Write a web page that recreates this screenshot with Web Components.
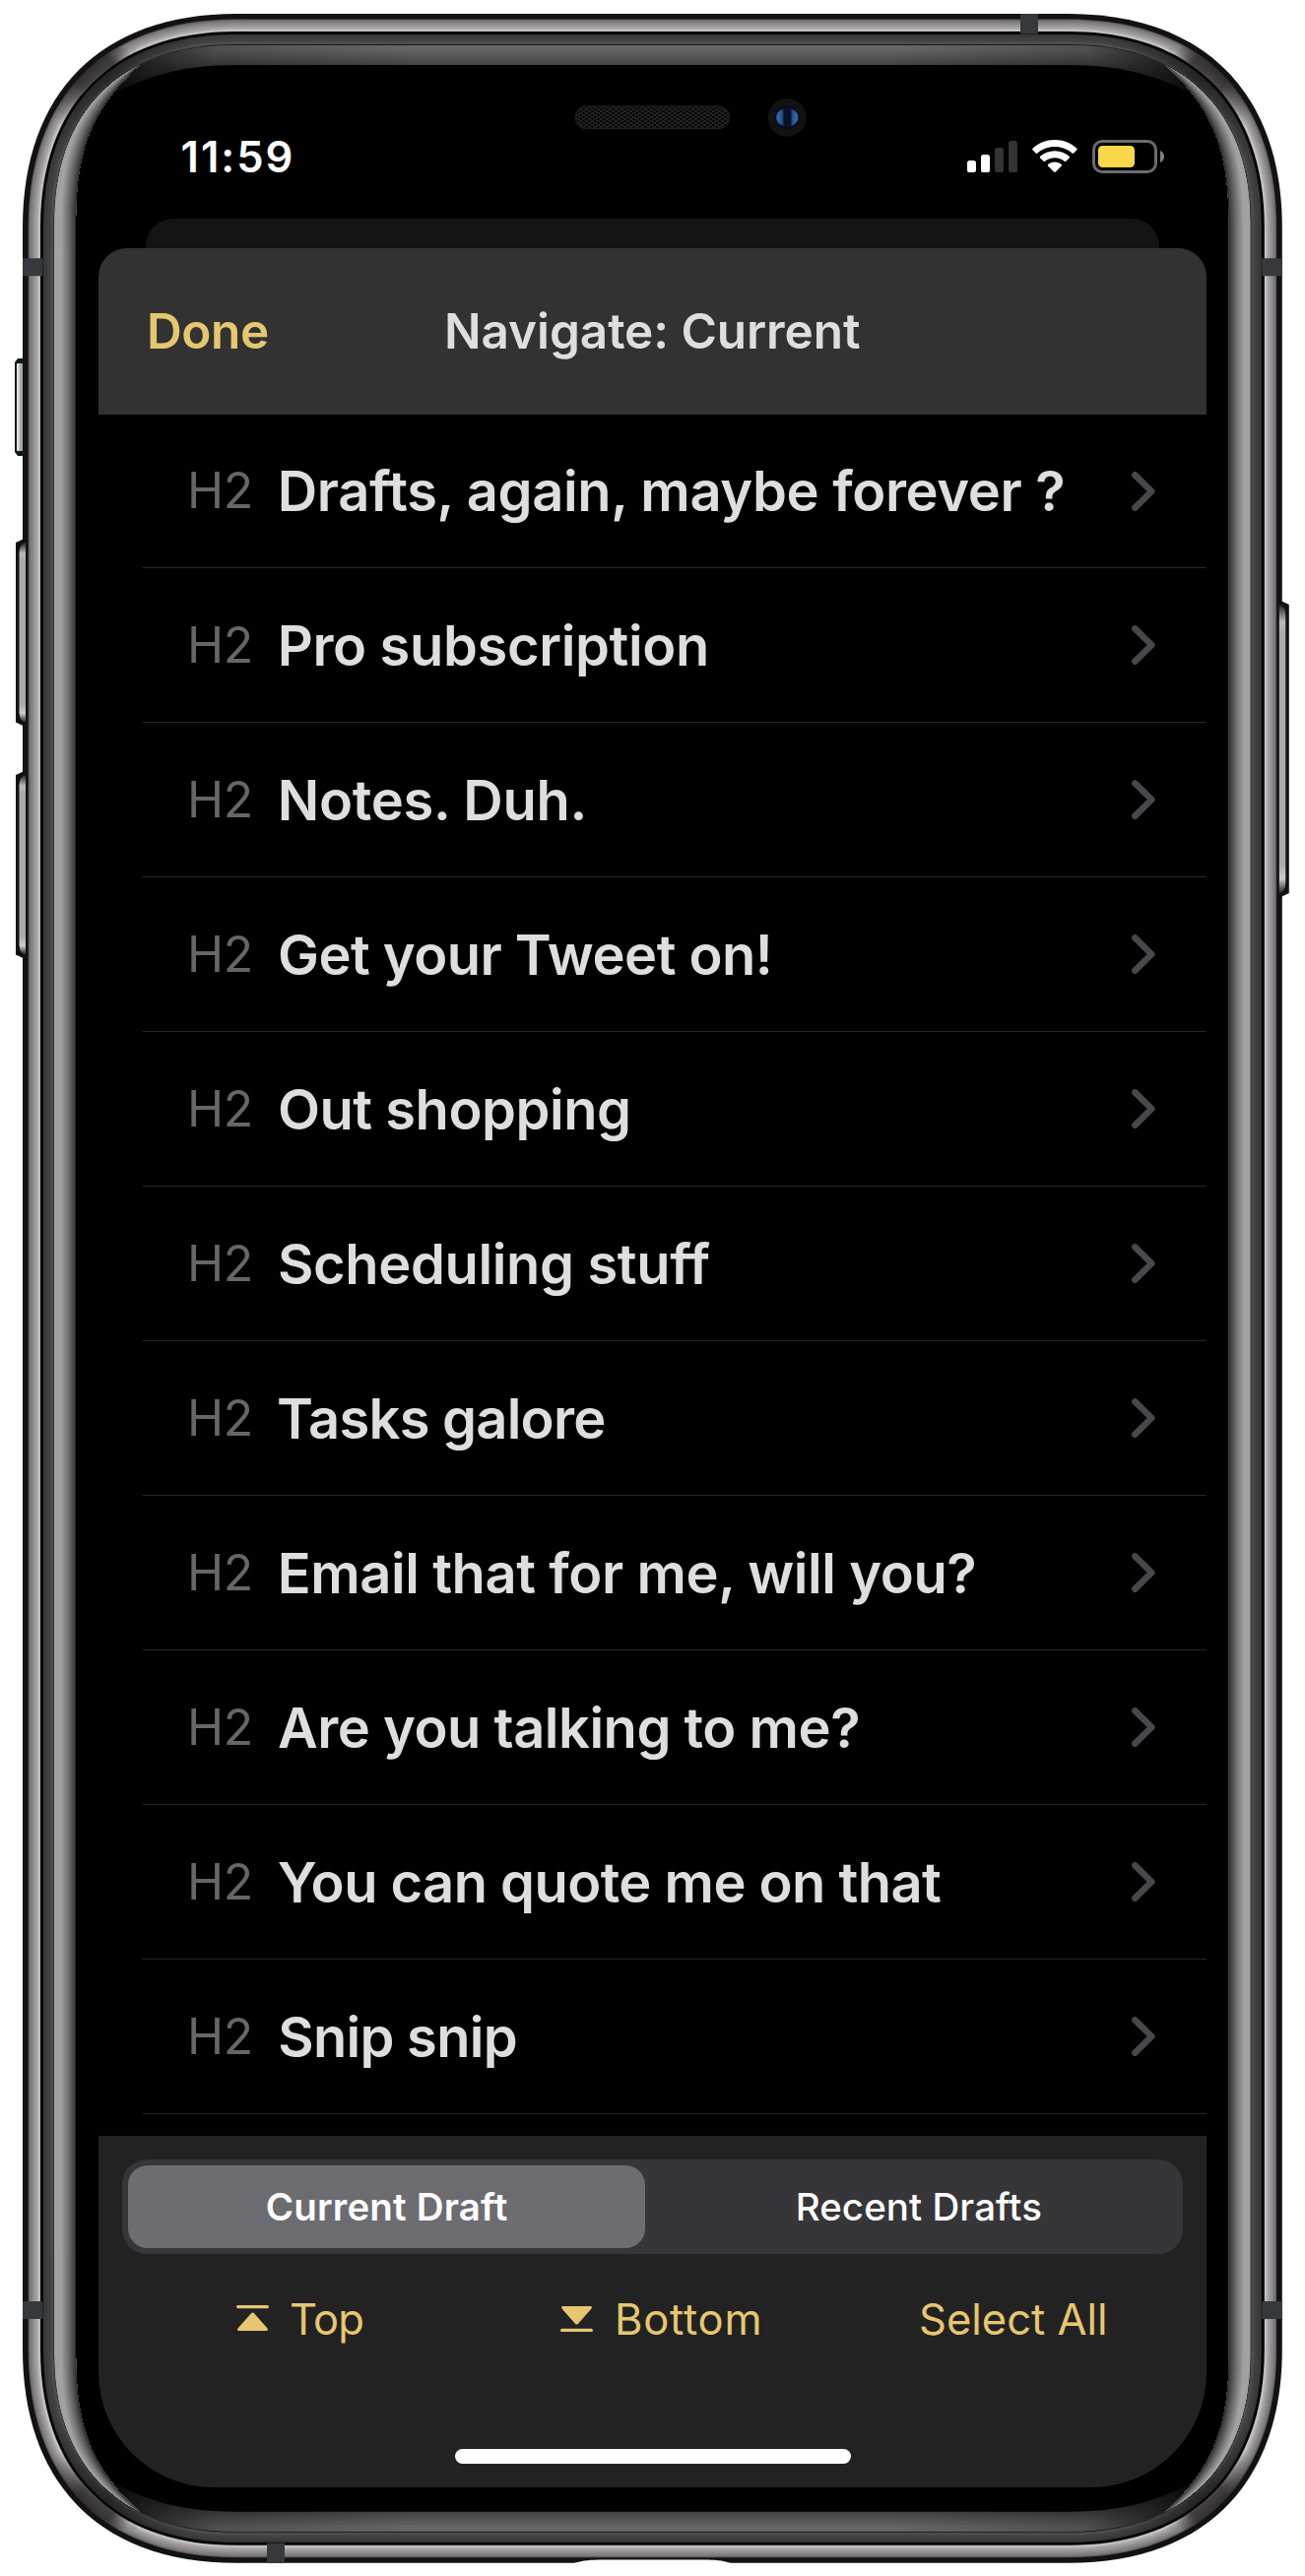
<!DOCTYPE html>
<html lang="en">
<head>
<meta charset="utf-8">
<title>Navigate: Current</title>
<style>
html, body { margin: 0; background: #fff; }
body { width: 1325px; height: 2616px; overflow: hidden; }
</style>
</head>
<body>
<phone-frame>
  <status-bar time="11:59"></status-bar>
  <modal-sheet>
    <nav-header slot="header"></nav-header>
    <heading-row ink="793.5" first>Drafts, again, maybe forever ?</heading-row>
    <heading-row ink="431.3">Pro subscription</heading-row>
    <heading-row ink="306.7">Notes. Duh.</heading-row>
    <heading-row ink="496.8" shift="-1.7">Get your Tweet on!</heading-row>
    <heading-row ink="354" shift="-1.7">Out shopping</heading-row>
    <heading-row ink="437.3" shift="-1.7">Scheduling stuff</heading-row>
    <heading-row ink="330.2" shift="-2.7">Tasks galore</heading-row>
    <heading-row ink="703.6">Email that for me, will you?</heading-row>
    <heading-row ink="588.2" shift="-2.7">Are you talking to me?</heading-row>
    <heading-row ink="672.4" shift="-3">You can quote me on that</heading-row>
    <heading-row ink="239.5" shift="-1.5">Snip snip</heading-row>
    <bottom-panel slot="footer"></bottom-panel>
  </modal-sheet>
</phone-frame>

<script>
const shadow = (el, html) => { el.attachShadow({ mode: 'open' }).innerHTML = html; return el.shadowRoot; };

// A single line of text whose box is exactly its visible ink width.
class InkText extends HTMLElement {
  connectedCallback() {
    if (this.shadowRoot) return;
    const size = this.getAttribute('size'), weight = this.getAttribute('weight') || 400;
    const ink = parseFloat(this.getAttribute('ink'));
    const fam = 'Inter, "Liberation Sans", sans-serif';
    const root = shadow(this, `<style>
      :host { display: block; flex: none; width: ${ink}px; font: ${weight} ${size}px/1.2 ${fam}; white-space: pre; }
      span { display: inline-block; }
    </style><span><slot></slot></span>`);
    const span = root.querySelector('span');
    const text = this.textContent;
    const ctx = document.createElement('canvas').getContext('2d');
    ctx.font = `${weight} ${size}px ${fam}`;
    const m = ctx.measureText(text);
    const left = -m.actualBoundingBoxLeft, right = m.width - m.actualBoundingBoxRight;
    const natural = span.getBoundingClientRect().width - left - right;
    span.style.letterSpacing = ((ink - natural) / (text.length - 1)) + 'px';
    span.style.marginLeft = -left + 'px';
  }
}
customElements.define('ink-text', InkText);

class StatusBar extends HTMLElement {
  connectedCallback() {
    shadow(this, `<style>
      :host { display: flex; align-items: center; height: 126px; padding: 96px 43px 0 84.5px; color: #fff; }
      svg { display: block; margin-left: auto; }
    </style>
    <ink-text size="43.5" weight="600" ink="111">${this.getAttribute('time')}</ink-text>
    <svg width="200" height="34" viewBox="0 0 200 34">
      <rect x="0" y="21" width="9" height="12" rx="2.6" fill="#fff"/>
      <rect x="14" y="15" width="9" height="18" rx="2.6" fill="#fff"/>
      <rect x="28" y="8" width="9" height="25" rx="2.6" fill="#333"/>
      <rect x="42" y="1" width="9" height="32" rx="2.6" fill="#333"/>
      <g fill="#fff" transform="translate(66 0)">
        <path d="M22.9 0C31.6 0 39.4 3.4 45.3 8.7C45.8 9.2 45.8 9.8 45.4 10.3L42.2 13.5C41.7 14 41 14 40.5 13.6C35.9 9.4 29.7 7 22.9 7C16.1 7 9.9 9.4 5.3 13.6C4.8 14 4.1 14 3.6 13.5L.4 10.3C0 9.8 0 9.2 .5 8.7C6.4 3.4 14.2 0 22.9 0Z"/>
        <path d="M22.9 11.2C28.6 11.2 33.8 13.3 37.7 16.8C38.2 17.3 38.2 17.9 37.7 18.4L34.2 21.8C33.8 22.2 33.2 22.2 32.7 21.8C30.1 19.5 26.7 18.2 22.9 18.2C19.1 18.2 15.7 19.5 13.1 21.8C12.6 22.2 12 22.2 11.6 21.8L8.1 18.4C7.6 17.9 7.6 17.3 8.1 16.8C12 13.3 17.2 11.2 22.9 11.2Z"/>
        <path d="M22.9 22.6C25.5 22.6 27.9 23.5 29.7 25C30.2 25.4 30.2 26 29.7 26.5L23.8 32.4C23.2 33 22.6 33 22 32.4L16.1 26.5C15.6 26 15.6 25.4 16.1 25C17.9 23.5 20.3 22.6 22.9 22.6Z"/>
      </g>
      <rect x="128.5" y="1.5" width="63" height="31" rx="8.5" fill="none" stroke="#6b6b6b" stroke-width="3"/>
      <rect x="133" y="6" width="37" height="22" rx="4.5" fill="#f8d84a"/>
      <path d="M196 11C198.600 12.200 200 14.300 200 17C200 19.700 198.600 21.800 196 23Z" fill="#808080"/>
    </svg>`);
  }
}
customElements.define('status-bar', StatusBar);

class NavHeader extends HTMLElement {
  connectedCallback() {
    shadow(this, `<style>
      :host { display: flex; align-items: center; gap: 182px; height: 169px; padding-left: 52px; background: #323232; border-radius: 29px 29px 0 0; color: #dedede; }
      .done { color: #e6c770; }
    </style>
    <ink-text class="done" size="49.5" weight="600" ink="120">Done</ink-text>
    <ink-text size="49.5" weight="600" ink="419">Navigate: Current</ink-text>`);
  }
}
customElements.define('nav-header', NavHeader);

class HeadingRow extends HTMLElement {
  connectedCallback() {
    const shift = parseFloat(this.getAttribute('shift') || 0);
    shadow(this, `<style>
      :host { display: grid; height: 157px; color: #dedede; }
      :host([first]) { height: 156px; }
      .row { display: flex; align-items: center; padding: 0 52px 0 94px; grid-area: 1 / 1; }
      .line { grid-area: 1 / 1; align-self: end; height: 1px; margin-left: 45px; background: #262626; }
      .level { color: #666; padding-bottom: 2px; }
      .title { margin-left: ${32 + shift}px; padding-top: 2px; }
      svg { margin-left: auto; display: block; margin-top: -1px; }
    </style>
    <div class="row">
      <ink-text class="level" size="50" weight="400" ink="59.7">H2</ink-text>
      <ink-text class="title" size="56" weight="600" ink="${this.getAttribute('ink')}">${this.textContent}</ink-text>
      <svg width="24" height="40" viewBox="0 0 24 40"><path d="M3.400 3.400L20.300 20L3.400 36.600" fill="none" stroke="#48484a" stroke-width="6.600" stroke-linecap="round" stroke-linejoin="round"/></svg>
    </div>
    <div class="line"></div>`);
  }
}
customElements.define('heading-row', HeadingRow);

class SegmentControl extends HTMLElement {
  connectedCallback() {
    shadow(this, `<style>
      :host { display: grid; grid-template-columns: 525px 1fr; box-sizing: border-box; height: 96px; padding: 6px; background: #363638; border-radius: 25px; color: #fff; }
      div { display: flex; align-items: center; border-radius: 20px; }
      .on { background: #6d6c71; padding-left: 140.700px; }
      .off { padding-left: 155.700px; }
    </style>
    <div class="on"><ink-text size="38.5" weight="600" ink="244">Current Draft</ink-text></div>
    <div class="off"><ink-text size="38.5" weight="500" ink="245.500">Recent Drafts</ink-text></div>`);
  }
}
customElements.define('segment-control', SegmentControl);

class BottomPanel extends HTMLElement {
  connectedCallback() {
    shadow(this, `<style>
      :host { display: flex; flex-direction: column; box-sizing: border-box; height: 357px; padding: 24px 24px 0; background: #222; border-radius: 0 0 117px 117px; color: #e6c770; }
      .tools { display: flex; align-items: center; height: 132px; padding-left: 116px; }
      svg { display: block; margin-top: -2px; }
      .top { margin: 0 200.700px 0 23px; }
      .bottom { margin: 0 164.500px 0 25px; }
      .home { align-self: center; width: 402px; height: 15px; margin-top: 66px; border-radius: 7.500px; background: #fff; }
    </style>
    <segment-control></segment-control>
    <div class="tools">
      <svg width="33" height="28" viewBox="0 0 33 28" fill="#e6c770"><rect y="1" width="33" height="3.200" rx="1.600"/><path d="M15.200 9.100Q16.500 7.900 17.800 9.100L31.300 24.200Q32.800 27 30.500 27H2.500Q.200 27 1.700 24.200Z"/></svg>
      <ink-text class="top" size="43.5" ink="72.3">Top</ink-text>
      <svg width="33" height="28" viewBox="0 0 33 28" fill="#e6c770"><path d="M15.200 19.900Q16.500 21.100 17.800 19.900L31.300 4.800Q32.800 2 30.500 2H2.500Q.200 2 1.700 4.800Z"/><rect y="24.800" width="33" height="3.200" rx="1.600"/></svg>
      <ink-text class="bottom" size="43.5" ink="143.5">Bottom</ink-text>
      <ink-text size="43.5" ink="187">Select All</ink-text>
    </div>
    <div class="home"></div>`);
  }
}
customElements.define('bottom-panel', BottomPanel);

class ModalSheet extends HTMLElement {
  connectedCallback() {
    shadow(this, `<style>
      :host { display: block; }
      .behind { height: 30px; margin: 0 48px; background: #141414; border-radius: 28px 28px 0 0; }
      .list { height: 1748px; background: #000; overflow: hidden; }
    </style>
    <div class="behind"></div>
    <slot name="header"></slot>
    <div class="list"><slot></slot></div>
    <slot name="footer"></slot>`);
  }
}
customElements.define('modal-sheet', ModalSheet);

class PhoneFrame extends HTMLElement {
  connectedCallback() {
    const CX = 662.4, CY = 1308.4, W = 2 * CX, H = 2 * CY;
    // Rounded outline given by its left/top edge, corner extent and tightness.
    const outline = (l, t, e, k = .632) => {
      const r = W - l, b = H - t, c = e * (1 - k);
      return `M${l + e} ${t}H${r - e}C${r - c} ${t} ${r} ${t + c} ${r} ${t + e}V${b - e}C${r} ${b - c} ${r - c} ${b} ${r - e} ${b}H${l + e}C${l + c} ${b} ${l} ${b - c} ${l} ${b - e}V${t + e}C${l} ${t + c} ${l + c} ${t} ${l + e} ${t}Z`;
    };
    const ramp = (stops, t) => {
      let i = 0;
      while (i < stops.length - 2 && t > stops[i + 1][0]) i++;
      const [a, u] = stops[i], [b, v] = stops[i + 1], f = (t - a) / (b - a);
      return `rgb(${u.map((n, j) => Math.round(n + (v[j] - n) * f))})`;
    };
    const g = n => [n, n, n];
    const rings = (l0, l1, t0, t1, e0, e1, stops) => {
      let s = ''; const n = Math.round((l1 - l0) * 1.5);
      for (let i = 0; i < n; i++) {
        const f = i / n;
        s += `<path d="${outline(l0 + (l1 - l0) * f, t0 + (t1 - t0) * f, e0 + (e1 - e0) * f)}" fill="${ramp(stops, f)}"/>`;
      }
      return s;
    };
    // Left glass edge: crescent strips that all meet at the two corner tips.
    let side = '';
    for (let i = 0; i < 33; i++) {
      const f = i / 33, x = 55 + 22 * f, y1 = 140 + 10 * f, x2 = 80 + 14 * f, y2 = 92 + 16 * f;
      side += `<path fill="${ramp([[0, g(160)], [.3, g(163)], [.65, g(110)], [.93, g(62)], [1, g(25)]], f)}" d="M146 62C${x2} ${y2} ${x} ${y1} ${x} 225V${H - 225}C${x} ${H - y1} ${x2} ${H - y2} 146 ${H - 62}C94 ${H - 108} 77 ${H - 150} 77 ${H - 225}V225C77 150 94 108 146 62Z"/>`;
    }
    const flipX = `translate(${W} 0) scale(-1 1)`, flipY = `translate(0 ${H}) scale(1 -1)`;
    const four = ['', flipX, flipY, flipX + ' ' + flipY];
    const button = (y, h, x) => `<path d="M24.500 ${y}L${x} ${y + 4}V${y + h - 4}L24.500 ${y + h}Z" fill="#111"/><path d="M26 ${y + 4}Q20 ${y + 5} 19.500 ${y + 14}V${y + h - 14}Q20 ${y + h - 5} 26 ${y + h - 4}Z" fill="url(#btn)"/>`;
    shadow(this, `<style>
      :host { display: grid; width: 1325px; height: 2616px; }
      .art { grid-area: 1 / 1; display: block; }
      .screen { grid-area: 1 / 1; width: 1125px; margin-left: 100px; }
    </style>
    <svg class="art" width="1325" height="2616" viewBox="0 0 1325 2616">
      <defs>
        <linearGradient id="btn" x2="0" y2="1"><stop stop-color="#222"/><stop offset=".06" stop-color="#bbb"/><stop offset=".1" stop-color="#aaa"/><stop offset=".9" stop-color="#aaa"/><stop offset=".95" stop-color="#ccc"/><stop offset="1" stop-color="#222"/></linearGradient>
        <linearGradient id="fade" gradientUnits="userSpaceOnUse" x1="110" y1="0" x2="1214.800" y2="0"><stop stop-color="#000" stop-opacity=".96"/><stop offset=".04" stop-color="#000" stop-opacity=".66"/><stop offset=".1" stop-color="#000" stop-opacity=".22"/><stop offset=".28" stop-color="#000" stop-opacity="0"/><stop offset=".72" stop-color="#000" stop-opacity="0"/><stop offset=".9" stop-color="#000" stop-opacity=".22"/><stop offset=".96" stop-color="#000" stop-opacity=".66"/><stop offset="1" stop-color="#000" stop-opacity=".96"/></linearGradient>
        <linearGradient id="shade" gradientUnits="userSpaceOnUse" x1="50" y1="115" x2="128" y2="48"><stop stop-color="#1c1a1b" stop-opacity="0"/><stop offset=".42" stop-color="#1c1a1b" stop-opacity=".75"/><stop offset=".8" stop-color="#2a2829" stop-opacity=".85"/><stop offset="1" stop-color="#333" stop-opacity=".1"/></linearGradient>
        <linearGradient id="corner" gradientUnits="userSpaceOnUse" x1="50" y1="150" x2="190" y2="35"><stop stop-opacity="0"/><stop offset=".5" stop-opacity=".38"/><stop offset="1" stop-opacity="0"/></linearGradient>
        <linearGradient id="lens"><stop stop-color="#3c6cae"/><stop offset=".25" stop-color="#28528f"/><stop offset=".36" stop-color="#0a1028"/><stop offset=".64" stop-color="#0a1028"/><stop offset=".75" stop-color="#28528f"/><stop offset="1" stop-color="#3c6cae"/></linearGradient>
        <pattern id="mesh" width="6" height="4" patternUnits="userSpaceOnUse"><rect width="6" height="4" fill="#222"/><circle cx="1.500" cy="1" r="1.300" fill="#040404"/><circle cx="4.500" cy="3" r="1.300" fill="#040404"/></pattern>
        <clipPath id="metal"><path clip-rule="evenodd" d="${outline(28.5, 19.5, 211)}${outline(41.5, 32, 198)}"/></clipPath>
        <clipPath id="lip"><path d="${outline(44, 35, 195)}"/></clipPath>
        <clipPath id="glass"><path d="${outline(55, 46, 183)}"/></clipPath>
      </defs>
      <path d="M24 364H18L15 368V459L18 463H24Z" fill="#15181a"/><rect x="17" y="369" width="7" height="89" rx="2" fill="#aaa"/><rect x="17" y="369" width="2.500" height="89" rx="1" fill="#dfe3e4"/>
      <path d="${outline(23, 14, 217)}" fill="#121212"/>
      ${rings(28.7, 41, 19.500, 32, 211, 198, [[0, [92, 88, 90]], [.12, [122, 118, 120]], [.75, [174, 171, 173]], [.9, [205, 203, 204]], [1, [160, 160, 160]]])}
      <g clip-path="url(#metal)">
        ${four.map(t => `<path transform="${t}" d="M30 125L75 48L140 48L110 100L30 150Z" fill="url(#shade)"/>`).join('')}
      </g>
      <path d="${outline(41, 32, 199)}" fill="#050505"/>
      ${rings(44, 55, 35, 45.500, 195, 184, [[0, g(55)], [.7, g(70)], [.75, g(92)], [.8, g(72)], [1, g(80)]])}
      <g clip-path="url(#lip)">${four.map(t => `<rect transform="${t}" x="30" y="30" width="210" height="210" fill="url(#corner)"/>`).join('')}</g>
      <path d="${outline(54.500, 45, 184)}" fill="#1c1c1c"/>
      ${rings(55, 77, 46, 66, 183, 165, [[0, g(104)], [.25, g(100)], [1, g(66)]])}
      <path d="${outline(55, 46, 183)}" fill="url(#fade)"/>
      <path d="M77 ${CY}V225C77 160 90 120 113 97C145 78 185 66 240 66H${W - 240}C${W - 185} 66 ${W - 145} 78 ${W - 113} 97C${W - 90} 120 ${W - 77} 160 ${W - 77} 225V${H - 225}C${W - 77} ${H - 160} ${W - 90} ${H - 120} ${W - 113} ${H - 97}C${W - 145} ${H - 78} ${W - 185} ${H - 66} ${W - 240} ${H - 66}H240C185 ${H - 66} 145 ${H - 78} 113 ${H - 97}C90 ${H - 120} 77 ${H - 160} 77 ${H - 225}Z" fill="#000"/>
      <g clip-path="url(#glass)"><g>${side}</g><g transform="${flipX}">${side}</g></g>
      <g fill="#36383c">
        <rect x="23" y="262.300" width="20.500" height="18"/><rect x="1281.300" y="262.300" width="20.500" height="18"/>
        <rect x="23" y="2337" width="20.500" height="18"/><rect x="1281.300" y="2337" width="20.500" height="18"/>
        <rect x="1036" y="14" width="18" height="20.500"/><rect x="271" y="2582.500" width="18" height="20.300"/>
      </g>
      ${button(547, 190.5, 16)}${button(783, 190.5, 16)}
      <g transform="${flipX}">${button(610, 301, 16)}</g>
      <path d="M583 2603C592 2600 600 2599.500 612 2599.500H714C726 2599.500 733 2600 742 2603V2606H583Z" fill="#fff"/>
      <rect x="584.500" y="108" width="156" height="22.500" rx="11.250" fill="url(#mesh)" stroke="#1b1b1b" stroke-width="1.500"/>
      <circle cx="799.300" cy="119.300" r="19.400" fill="#101214"/>
      <circle cx="799.300" cy="119.300" r="12" fill="#060a1a"/>
      <ellipse cx="799.300" cy="119.300" rx="11" ry="9.500" fill="url(#lens)"/>
    </svg>
    <div class="screen"><slot></slot></div>`);
  }
}
customElements.define('phone-frame', PhoneFrame);
</script>
</body>
</html>
